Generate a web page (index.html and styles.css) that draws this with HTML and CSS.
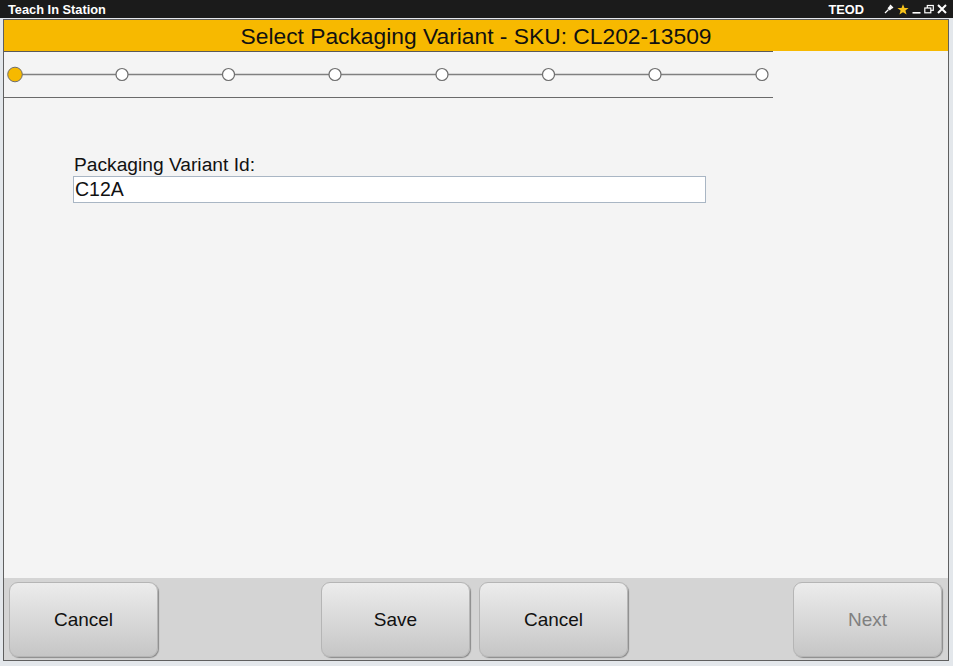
FILE: index.html
```html
<!DOCTYPE html>
<html>
<head>
<meta charset="utf-8">
<link rel="stylesheet" href="styles.css">
</head>
<body>
<div class="app">
  <div class="titlebar">
    <span class="app-name">Teach In Station</span>
    <span class="user">TEOD</span>
    <div class="win-icons">
      <svg class="ic" width="10" height="10" viewBox="0 0 10 10"><path d="M1 9 L4.5 5.5" stroke="#fff" stroke-width="1.3"/><path d="M3.5 4.2 L6 1.5 L8.5 4 L5.8 6.5 Z" fill="#fff"/><path d="M6 1 L9 4" stroke="#fff" stroke-width="1.2"/></svg>
      <svg class="ic" width="12" height="11" viewBox="0 0 12 11"><path d="M6 0.3 L7.5 4 L11.6 4.1 L8.4 6.6 L9.6 10.6 L6 8.3 L2.4 10.6 L3.6 6.6 L0.4 4.1 L4.5 4 Z" fill="#f6c21b"/></svg>
      <svg class="ic" width="9" height="10" viewBox="0 0 9 10"><rect x="0.5" y="8" width="8" height="1.6" fill="#fff"/></svg>
      <svg class="ic" width="10" height="10" viewBox="0 0 10 10"><rect x="3.3" y="1.5" width="6" height="4.8" fill="none" stroke="#fff" stroke-width="1.2"/><rect x="0.8" y="4" width="6" height="4.8" fill="#1b1b1b" stroke="#fff" stroke-width="1.2"/></svg>
      <svg class="ic" width="10" height="10" viewBox="0 0 10 10"><path d="M1 1 L9 9 M9 1 L1 9" stroke="#fff" stroke-width="2"/></svg>
    </div>
  </div>
  <div class="frame">
    <div class="window">
      <div class="header">Select Packaging Variant - SKU: CL202-13509</div>
      <div class="stepper">
        <svg width="769" height="45" viewBox="0 0 769 45">
          <line x1="11" y1="22.5" x2="758" y2="22.5" stroke="#808080" stroke-width="1.5"/>
          <circle cx="11" cy="22.5" r="7.3" fill="#f6b900" stroke="#6e6e6e" stroke-width="1"/>
          <circle cx="118" cy="22.5" r="6" fill="#fff" stroke="#6e6e6e" stroke-width="1.2"/>
          <circle cx="224.5" cy="22.5" r="6" fill="#fff" stroke="#6e6e6e" stroke-width="1.2"/>
          <circle cx="331" cy="22.5" r="6" fill="#fff" stroke="#6e6e6e" stroke-width="1.2"/>
          <circle cx="438" cy="22.5" r="6" fill="#fff" stroke="#6e6e6e" stroke-width="1.2"/>
          <circle cx="544.5" cy="22.5" r="6" fill="#fff" stroke="#6e6e6e" stroke-width="1.2"/>
          <circle cx="651" cy="22.5" r="6" fill="#fff" stroke="#6e6e6e" stroke-width="1.2"/>
          <circle cx="758" cy="22.5" r="6" fill="#fff" stroke="#6e6e6e" stroke-width="1.2"/>
        </svg>
      </div>
      <div class="content">
        <label class="field-label">Packaging Variant Id:</label>
        <div class="input">C12A</div>
      </div>
      <div class="actions">
        <div class="left"><button class="btn">Cancel</button></div>
        <div class="center"><button class="btn">Save</button><button class="btn">Cancel</button></div>
        <div class="right"><button class="btn disabled">Next</button></div>
      </div>
    </div>
  </div>
</div>
</body>
</html>
```
FILE: styles.css
```css
* { box-sizing: border-box; }
html, body { margin: 0; padding: 0; }
body {
  width: 953px;
  height: 666px;
  overflow: hidden;
  font-family: "Liberation Sans", Arial, sans-serif;
  background: #dfe3e8;
}
.app {
  width: 953px;
  height: 666px;
  display: flex;
  flex-direction: column;
}
.titlebar {
  height: 18px;
  background: #1b1b1b;
  color: #fff;
  display: flex;
  align-items: center;
  font-weight: bold;
  font-size: 12.8px;
  padding: 0 6px 0 8px;
  flex-shrink: 0;
}
.app-name { flex: 1; padding-top: 1px; }
.user { margin-right: 20px; padding-top: 1px; }
.win-icons {
  display: flex;
  align-items: center;
  gap: 3px;
}
.ic { display: block; }
.frame {
  flex: 1;
  padding: 1px 4px 5px 3px;
  background: #e3e7eb;
  display: flex;
}
.window {
  flex: 1;
  border: 1px solid #5f5f5f;
  background: #f4f4f4;
  display: flex;
  flex-direction: column;
}
.header {
  height: 31px;
  background: #f7b900;
  color: #111;
  font-size: 22.8px;
  text-align: center;
  line-height: 33px;
  flex-shrink: 0;
}
.stepper {
  width: 769px;
  height: 47px;
  border-top: 1px solid #5a5a5a;
  border-bottom: 1.5px solid #6a6a6a;
  flex-shrink: 0;
}
.stepper svg { display: block; }
.content {
  flex: 1;
  padding: 56px 0 0 69px;
}
.field-label {
  display: block;
  font-size: 19.2px;
  color: #111;
  padding-left: 1px;
  line-height: 21px;
  margin-bottom: 1px;
}
.input {
  width: 633px;
  height: 27px;
  border: 1px solid #a9b6c4;
  background: #fff;
  font-size: 19.5px;
  color: #111;
  padding: 1px 0 0 1px;
  line-height: 23px;
}
.actions {
  height: 82px;
  background: #d4d4d4;
  display: grid;
  grid-template-columns: 1fr auto 1fr;
  align-items: center;
  padding: 0 6px 0 5px;
  flex-shrink: 0;
}
.left { display: flex; justify-content: flex-start; }
.center { display: flex; gap: 9px; margin-left: -2px; }
.right { display: flex; justify-content: flex-end; }
.btn {
  width: 149px;
  height: 75px;
  border-radius: 9px;
  border: 1px solid #b5b5b5;
  background: linear-gradient(#ececec, #c6c6c6);
  box-shadow: 1px 1px 1px rgba(0,0,0,0.35);
  font-family: "Liberation Sans", Arial, sans-serif;
  font-size: 19px;
  color: #111;
  padding: 0;
  margin-top: 1px;
}
.btn.disabled { color: #808080; }
```
